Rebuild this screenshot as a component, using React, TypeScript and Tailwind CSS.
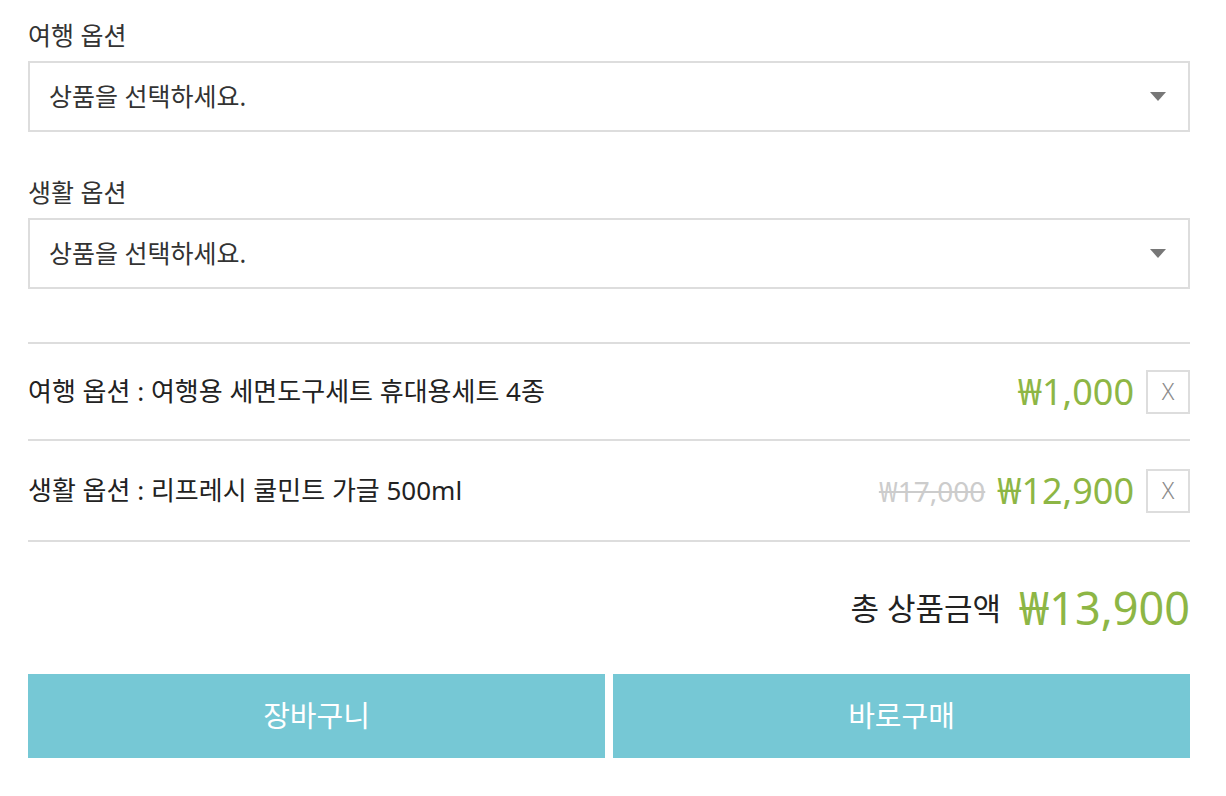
import React from "react";

const font = { fontFamily: '"Noto Sans", "Noto Sans CJK KR", sans-serif' };

function Select({ label }: { label: string }) {
  return (
    <div>
      <div className="text-[25px] leading-[30px] text-[#333] mb-[11px]">{label}</div>
      <div className="h-[71px] border-2 border-[#ddd] flex items-center justify-between pl-[19px] pr-[22px]">
        <span className="text-[25px] text-[#333]">상품을 선택하세요.</span>
        <svg width="16" height="10" viewBox="0 0 16 10">
          <path d="M0 0 L16 0 L8 9 Z" fill="#777" />
        </svg>
      </div>
    </div>
  );
}

function XBtn() {
  return (
    <div className="w-[44px] h-[44px] border-2 border-[#ddd] flex items-center justify-center text-[23px] font-light text-[#8a8a8a] ml-[12px]">
      X
    </div>
  );
}

export default function App() {
  return (
    <div className="bg-white w-[1226px] h-[796px] pl-[28px] pt-[20px] pr-[36px]" style={font}>
      <div className="flex flex-col gap-[45px]">
        <Select label="여행 옵션" />
        <Select label="생활 옵션" />
      </div>
      <div className="mt-[53px] border-t-2 border-[#ddd]">
        <div className="h-[97px] flex items-center justify-between border-b-2 border-[#ddd]">
          <span className="text-[26px] text-[#222]">여행 옵션 : 여행용 세면도구세트 휴대용세트 4종</span>
          <div className="flex items-center">
            <span className="text-[36px] text-[#8db645]">₩1,000</span>
            <XBtn />
          </div>
        </div>
        <div className="h-[101px] flex items-center justify-between border-b-2 border-[#ddd]">
          <span className="text-[26px] text-[#222]">생활 옵션 : 리프레시 쿨민트 가글 500ml</span>
          <div className="flex items-center">
            <span className="text-[28px] text-[#ccc] line-through mr-[12px]">₩17,000</span>
            <span className="text-[36px] text-[#8db645]">₩12,900</span>
            <XBtn />
          </div>
        </div>
      </div>
      <div className="flex items-center justify-end h-[132px]">
        <span className="text-[31px] text-[#222] mr-[18px]">총 상품금액</span>
        <span className="text-[45px] text-[#8db645]">₩13,900</span>
      </div>
      <div className="flex gap-[8px]">
        <button className="flex-1 h-[84px] bg-[#76c8d5] text-white text-[29px]">장바구니</button>
        <button className="flex-1 h-[84px] bg-[#76c8d5] text-white text-[29px]">바로구매</button>
      </div>
    </div>
  );
}
